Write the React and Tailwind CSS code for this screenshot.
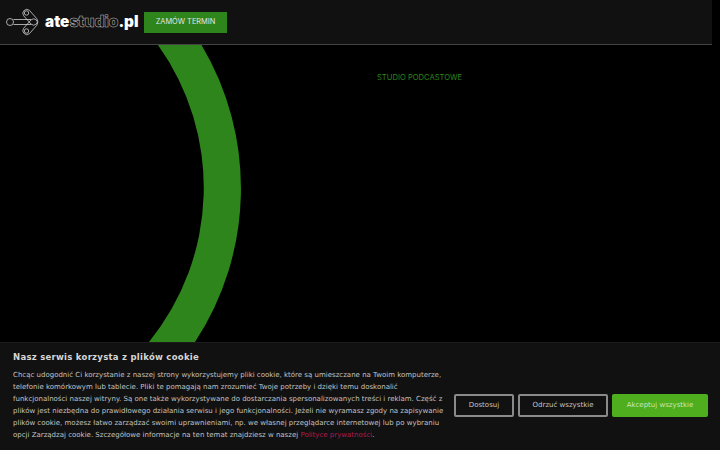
import React from 'react';

const sans = "font-['DejaVu_Sans',sans-serif]";

const LogoMark = () => (
  <svg width="36" height="32" viewBox="6 6 36 32" fill="none" stroke="#cfcfcf" strokeWidth="0.8">
    <circle cx="10" cy="22" r="3.5" />
    <path d="M13.500 19.500H31M13.500 24.500H31" />
    <path d="M29.400 10.300L36.900 18.800A4 4 0 0 1 31.100 24.200L23.600 15.700A4 4 0 0 1 29.400 10.300Z" />
    <path d="M29.400 33.700L36.900 25.200A4 4 0 0 0 31.100 19.800L23.600 28.300A4 4 0 0 0 29.400 33.700Z" />
    <circle cx="26.500" cy="13" r="2.200" />
    <circle cx="26.500" cy="31" r="2.200" />
  </svg>
);

const Header = () => (
  <header className="h-[45px] bg-[#111111] border-b border-[#444444] mr-2 flex items-center pl-[6px] shrink-0">
    <LogoMark />
    <div className="ml-[3px] w-[94px] whitespace-nowrap font-['Inter',sans-serif] font-black text-[15.300px] leading-none text-white">
      ate<span className="text-transparent [-webkit-text-stroke:0.5px_#bdbdbd]">studio</span>.pl
    </div>
    <a className="ml-[5px] w-[83px] h-[21px] bg-[#2e851c] flex items-center justify-center font-['Inter',sans-serif] text-[7.400px] text-[#e4e4e4]">
      ZAMÓW TERMIN
    </a>
  </header>
);

const Hero = () => (
  <main className="relative flex-1 bg-black overflow-hidden pl-[377px] pt-[27px]">
    <svg className="absolute left-0 top-0" width="300" height="405" viewBox="0 45 300 405">
      <path
        d="M158 45 A245 245 0 0 1 149 342 L195 342 A280 280 0 0 0 201.500 45 Z"
        fill="#2e851c"
      />
    </svg>
    <p className="relative font-['Inter',sans-serif] text-[7.600px] leading-[12px] text-[#2e851c]">STUDIO PODCASTOWE</p>
  </main>
);

const CookieBar = () => (
  <section className={`absolute left-0 right-0 bottom-0 h-[108px] bg-[#111111] border-t border-[#1c1c1c] flex items-start pt-[8px] pl-[13px] pr-[12px] ${sans}`}>
    <div className="w-[436px] shrink-0">
      <h2 className="text-[8.500px] leading-[12px] font-bold text-[#d6d6d6] tracking-[0.27px]">Nasz serwis korzysta z plików cookie</h2>
      <p className="mt-[6px] text-[7px] leading-[12px] text-[#c2c2c2]">
        Chcąc udogodnić Ci korzystanie z naszej strony wykorzystujemy pliki cookie, które są umieszczane na Twoim komputerze,
        telefonie komórkowym lub tablecie. Pliki te pomagają nam zrozumieć Twoje potrzeby i dzięki temu doskonalić<br />
        funkcjonalności naszej witryny. Są one także wykorzystywane do dostarczania spersonalizowanych treści i reklam. Część z
        plików jest niezbędna do prawidłowego działania serwisu i jego funkcjonalności. Jeżeli nie wyramasz zgody na zapisywanie
        plików cookie, możesz łatwo zarządzać swoimi uprawnieniami, np. we własnej przeglądarce internetowej lub po wybraniu
        opcji Zarządzaj cookie. Szczegółowe informacje na ten temat znajdziesz w naszej <a className="text-[#b01a50]">Polityce prywatności</a>.
      </p>
    </div>
    <div className="ml-auto flex gap-[4px] mt-[43px] text-[7px]">
      <button className="w-[60px] h-[23px] border-2 border-[#8a8a8a] rounded-[2px] text-[#c4c4c4]">Dostosuj</button>
      <button className="w-[90px] h-[23px] border-2 border-[#8a8a8a] rounded-[2px] text-[#c4c4c4]">Odrzuć wszystkie</button>
      <button className="w-[96px] h-[23px] bg-[#4fae1e] rounded-[2px] text-[#c9e6b8]">Akceptuj wszystkie</button>
    </div>
  </section>
);

const App = () => (
  <div className="relative w-[720px] h-[450px] overflow-hidden bg-black flex flex-col">
    <Header />
    <Hero />
    <CookieBar />
  </div>
);

export default App;
